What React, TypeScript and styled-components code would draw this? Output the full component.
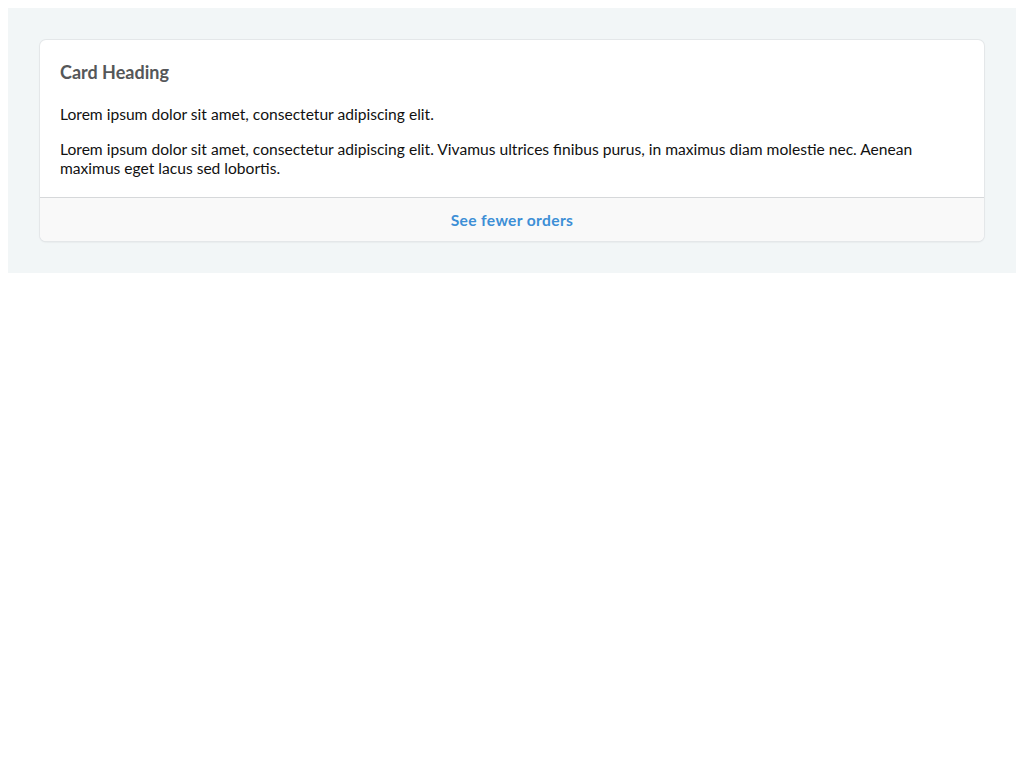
import React from "react";
import styled, { createGlobalStyle } from "styled-components";

const Global = createGlobalStyle`
  body {
    margin: 8px;
    font-family: Lato, "Noto Sans", sans-serif;
    background: #ffffff;
  }
`;

const Page = styled.div`
  background: #f2f6f7;
  padding: 32px;
`;

const Card = styled.div`
  background: #ffffff;
  border-radius: 6px;
  box-shadow: 0 0 0 1px #e4e7e9, 0 1px 2px rgba(0, 0, 0, 0.12);
  overflow: hidden;
`;

const Body = styled.div`
  padding: 21px 20px 19px;
`;

const Heading = styled.h2`
  margin: 0 0 22px;
  font-size: 18px;
  line-height: 22px;
  font-weight: 700;
  color: #555759;
`;

const Para = styled.p`
  margin: 0 0 16px;
  font-size: 15.6px;
  line-height: 19px;
  color: #111111;
  &:last-child {
    margin-bottom: 0;
  }
`;

const Footer = styled.div`
  border-top: 1px solid #d6d8da;
  background: #f9f9f9;
  height: 43px;
  display: flex;
  align-items: center;
  justify-content: center;
`;

const FooterLink = styled.a`
  font-size: 15.6px;
  letter-spacing: 0.35px;
  font-weight: 700;
  color: #3d8fd6;
  text-decoration: none;
  cursor: pointer;
`;

export default function App() {
  return (
    <>
      <Global />
      <Page>
        <Card>
          <Body>
            <Heading>Card Heading</Heading>
            <Para>Lorem ipsum dolor sit amet, consectetur adipiscing elit.</Para>
            <Para>
              Lorem ipsum dolor sit amet, consectetur adipiscing elit. Vivamus ultrices finibus purus, in maximus diam
              molestie nec. Aenean maximus eget lacus sed lobortis.
            </Para>
          </Body>
          <Footer>
            <FooterLink>See fewer orders</FooterLink>
          </Footer>
        </Card>
      </Page>
    </>
  );
}
